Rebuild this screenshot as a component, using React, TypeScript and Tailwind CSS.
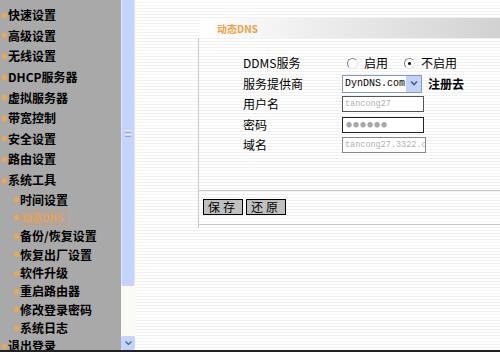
import React from 'react'

const font = { fontFamily: '"Noto Sans CJK SC", "DejaVu Sans", sans-serif' }
const mono = { fontFamily: '"Liberation Mono", "DejaVu Sans Mono", monospace' }

const topItems = ['快速设置', '高级设置', '无线设置', 'DHCP服务器', '虚拟服务器', '带宽控制', '安全设置', '路由设置', '系统工具']
const subItems = ['时间设置', '动态DNS', '备份/恢复设置', '恢复出厂设置', '软件升级', '重启路由器', '修改登录密码', '系统日志']

function Dot() {
  return <span className="w-[5px] h-[5px] rounded-full bg-[#f0a848] flex-none" />
}

function Radio({ checked }: { checked?: boolean }) {
  return (
    <span className="w-[11px] h-[11px] rounded-full border border-t-[#808080] border-l-[#808080] border-r-[#e8e8e8] border-b-[#e8e8e8] bg-white flex items-center justify-center flex-none">
      {checked && <span className="w-[3px] h-[3px] rounded-full bg-black" />}
    </span>
  )
}

function Sidebar() {
  return (
    <nav className="w-[121px] flex-none bg-[#a9a9a9] h-full overflow-hidden pt-[5px]">
      {topItems.map((t) => (
        <div key={t} className="h-[20.6px] flex items-center gap-[1px] pl-[2px] text-[12px] font-bold text-black">
          <Dot />
          <span>{t}</span>
        </div>
      ))}
      {subItems.map((t, i) => (
        <div key={t} className="h-[18.4px] flex items-center gap-[1px] pl-[14px] text-[12px] font-bold text-black">
          <Dot />
          {i === 1 ? (
            <span className="border border-dotted border-[#e89040] text-[#e8a050] px-[1px] leading-[13px] w-[47px] overflow-hidden whitespace-nowrap text-[10px]">
              {t}
            </span>
          ) : (
            <span>{t}</span>
          )}
        </div>
      ))}
      <div className="h-[18px] flex items-center gap-[1px] pl-[2px] text-[12px] font-bold text-black">
        <Dot />
        <span>退出登录</span>
      </div>
    </nav>
  )
}

function Scrollbar() {
  return (
    <div className="w-[14px] flex-none h-full bg-[#fbfbf6] flex flex-col">
      <div className="h-[286px] bg-[#c4d4fc] border-x border-[#dce6fe] rounded-b-[2px] flex items-center justify-center">
        <div className="flex flex-col gap-[1px] mt-[-20px]">
          <span className="w-[6px] h-[1px] bg-[#eef2fe]" />
          <span className="w-[6px] h-[1px] bg-[#8ca4e0]" />
          <span className="w-[6px] h-[1px] bg-[#eef2fe]" />
          <span className="w-[6px] h-[1px] bg-[#8ca4e0]" />
        </div>
      </div>
      <div className="flex-1" />
      <div className="h-[14px] bg-[#c4d4fc] rounded-[2px] flex items-center justify-center">
        <svg width="7" height="4" viewBox="0 0 7 4"><path d="M0.5 0.5 L3.5 3.5 L6.5 0.5" stroke="#4d6185" fill="none" strokeWidth="1.2" /></svg>
      </div>
    </div>
  )
}

export default function App() {
  return (
    <div className="w-[500px] h-[352px] flex overflow-hidden bg-[#222]" style={font}>
      <div className="flex w-full h-[350px]">
        <Sidebar />
        <Scrollbar />
        <main className="flex-1 h-full pt-[18px] bg-[repeating-linear-gradient(180deg,#ffffff_0px,#ffffff_2px,#f1f1f1_2px,#f1f1f1_3px)]">
          <div className="flex h-[20px]">
            <div className="w-[65px]" />
            <div className="flex-1 bg-gradient-to-r from-white to-[#d2d2d2] flex items-center pl-[17px]">
              <span className="text-[10px] font-bold text-[#f0a040]">动态DNS</span>
            </div>
          </div>
          <div className="ml-[63px] border-l border-[#c8c8c8] h-[190px] flex flex-col">
            <div className="pt-[15px] pl-[44px] text-[12px] text-black">
              <div className="h-[20.5px] flex items-center">
                <span className="w-[99px]">DDMS服务</span>
                <span className="flex items-center gap-[6px] pl-[5px]">
                  <Radio />
                  <span className="mr-[10px]">启用</span>
                  <Radio checked />
                  <span>不启用</span>
                </span>
              </div>
              <div className="h-[20.5px] flex items-center">
                <span className="w-[99px]">服务提供商</span>
                <span className="flex items-center">
                  <span className="w-[80px] h-[18px] border border-[#7f9db9] bg-white flex items-center pl-[2px] text-[10px] overflow-hidden whitespace-nowrap" style={mono}>
                    <span className="flex-1 overflow-hidden">DynDNS.com</span>
                    <span className="w-[15px] h-[16px] bg-[#c1d3fb] flex items-center justify-center flex-none">
                      <svg width="8" height="5" viewBox="0 0 8 5"><path d="M1 0.5 L4 3.5 L7 0.5" stroke="#4d6185" fill="none" strokeWidth="1.6" /></svg>
                    </span>
                  </span>
                  <span className="ml-[6px] font-bold">注册去</span>
                </span>
              </div>
              <div className="h-[20.5px] flex items-center">
                <span className="w-[99px]">用户名</span>
                <span className="w-[82px] h-[16px] border border-[#555] bg-white text-[8.5px] text-[#b0b0b0] pl-[2px] leading-[14px]" style={mono}>tancong27</span>
              </div>
              <div className="h-[20.5px] flex items-center">
                <span className="w-[99px]">密码</span>
                <span className="w-[82px] h-[16px] border border-[#222] bg-white text-[6px] text-[#a8a8a8] pl-[3px] leading-[14px] tracking-[1px]">●●●●●●</span>
              </div>
              <div className="h-[20.5px] flex items-center">
                <span className="w-[99px]">域名</span>
                <span className="w-[84px] h-[16px] border border-[#888] bg-white text-[8.5px] text-[#b0b0b0] pl-[2px] leading-[14px] overflow-hidden whitespace-nowrap" style={mono}>tancong27.3322.o</span>
              </div>
            </div>
            <div className="mt-[34px] border-t border-[#c8c8c8] flex items-center gap-[3px] pl-[4px] pt-[8px] pb-[9px] border-b">
              <button className="w-[40px] h-[16px] bg-[#c0c0c0] border border-black text-[12px] leading-[14px] tracking-[3px]">保存</button>
              <button className="w-[40px] h-[16px] bg-[#c0c0c0] border border-black text-[12px] leading-[14px] tracking-[3px]">还原</button>
            </div>
          </div>
        </main>
      </div>
    </div>
  )
}
